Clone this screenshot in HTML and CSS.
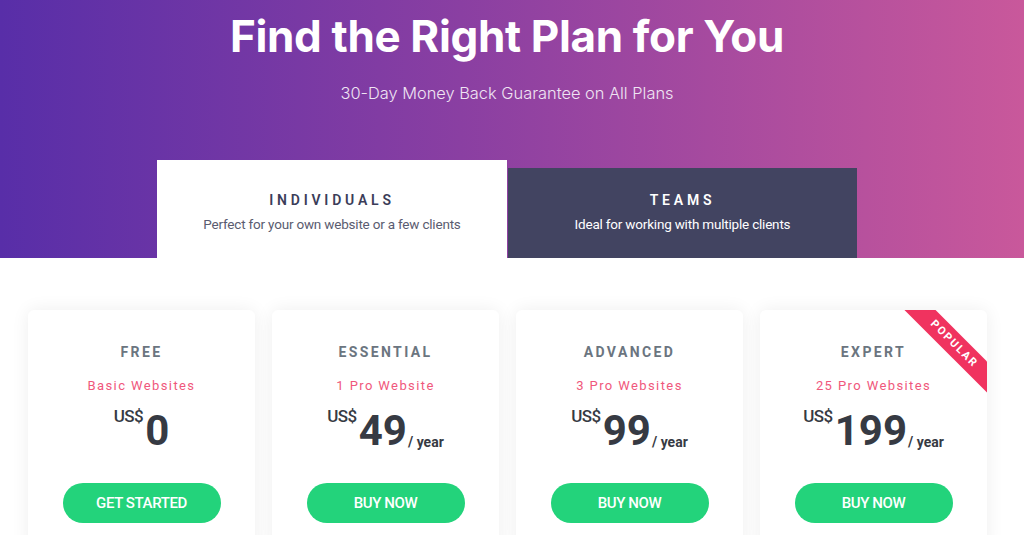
FILE: index.html
```html
<!DOCTYPE html>
<html>
<head>
<meta charset="utf-8">
<link rel="stylesheet" href="styles.css">
</head>
<body>
<section class="hero">
  <h1 class="hero-title">Find the Right Plan for You</h1>
  <p class="hero-sub">30-Day Money Back Guarantee on All Plans</p>
  <div class="tabs">
    <div class="tab tab-active">
      <div class="tab-title">INDIVIDUALS</div>
      <div class="tab-desc">Perfect for your own website or a few clients</div>
    </div>
    <div class="tab tab-dark">
      <div class="tab-title">TEAMS</div>
      <div class="tab-desc">Ideal for working with multiple clients</div>
    </div>
  </div>
</section>
<section class="plans">
  <div class="card">
    <div class="plan-name">FREE</div>
    <div class="plan-sites">Basic Websites</div>
    <div class="price"><span class="cur">US$</span><span class="amount">0</span></div>
    <a class="btn">GET STARTED</a>
  </div>
  <div class="card">
    <div class="plan-name">ESSENTIAL</div>
    <div class="plan-sites">1 Pro Website</div>
    <div class="price"><span class="cur">US$</span><span class="amount">49</span><span class="per">/ year</span></div>
    <a class="btn">BUY NOW</a>
  </div>
  <div class="card">
    <div class="plan-name">ADVANCED</div>
    <div class="plan-sites">3 Pro Websites</div>
    <div class="price"><span class="cur">US$</span><span class="amount">99</span><span class="per">/ year</span></div>
    <a class="btn">BUY NOW</a>
  </div>
  <div class="card">
    <div class="ribbon">POPULAR</div>
    <div class="plan-name">EXPERT</div>
    <div class="plan-sites">25 Pro Websites</div>
    <div class="price"><span class="cur">US$</span><span class="amount">199</span><span class="per">/ year</span></div>
    <a class="btn">BUY NOW</a>
  </div>
</section>
</body>
</html>
```
FILE: styles.css
```css
html, body {
  margin: 0;
  padding: 0;
  background: #fff;
  overflow: hidden;
}
body {
  font-family: Roboto, "Liberation Sans", sans-serif;
}
.hero {
  background: linear-gradient(90deg, #582ea8 0%, #8a3fa2 45%, #c9589b 100%);
  display: flex;
  flex-direction: column;
  align-items: center;
  height: 258px;
  box-sizing: border-box;
  padding: 9px 10px 0 0;
}
.hero-title {
  margin: 0;
  font-family: Inter, "Liberation Sans", sans-serif;
  font-weight: 700;
  font-size: 44px;
  line-height: 54px;
  color: #fff;
  letter-spacing: -0.35px;
}
.hero-sub {
  margin: 19px 0 0;
  font-family: Inter, "Liberation Sans", sans-serif;
  font-weight: 300;
  font-size: 16.4px;
  line-height: 22px;
  color: #efe4f3;
}
.tabs {
  margin-top: auto;
  display: flex;
  align-items: flex-end;
  width: 700px;
}
.tab {
  width: 350px;
  display: flex;
  flex-direction: column;
  align-items: center;
  box-sizing: border-box;
}
.tab-active {
  background: #fff;
  height: 98px;
  padding-top: 31px;
}
.tab-dark {
  background: #424461;
  height: 90px;
  padding-top: 23px;
  margin-left: 1px;
  width: 349px;
}
.tab-title {
  font-weight: 600;
  font-size: 14px;
  letter-spacing: 3.8px;
  line-height: 18px;
  color: #3b3d59;
}
.tab-dark .tab-title {
  color: #fff;
}
.tab-desc {
  margin-top: 7px;
  font-size: 13.5px;
  line-height: 16px;
  color: #5a5c70;
  letter-spacing: -0.2px;
}
.tab-dark .tab-desc {
  color: #fff;
}
.plans {
  display: flex;
  gap: 17px;
  padding: 52px 0 0 28px;
}
.card {
  position: relative;
  overflow: hidden;
  width: 227px;
  height: 240px;
  background: #fff;
  border-radius: 6px;
  box-shadow: 0 0 18px rgba(0, 0, 0, 0.07);
  display: flex;
  flex-direction: column;
  align-items: center;
  padding-top: 34px;
  box-sizing: border-box;
}
.plan-name {
  font-weight: 700;
  font-size: 14px;
  line-height: 16px;
  letter-spacing: 2.4px;
  color: #6b7580;
}
.plan-sites {
  margin-top: 18px;
  font-size: 13px;
  line-height: 16px;
  letter-spacing: 1.4px;
  color: #f0577c;
}
.price {
  margin-top: 13px;
  display: flex;
  align-items: flex-start;
  color: #363a43;
  height: 48px;
}
.cur {
  font-size: 17px;
  line-height: 20px;
  margin-top: -1px;
  font-weight: 500;
  letter-spacing: -0.5px;
}
.amount {
  font-size: 42px;
  font-weight: 700;
  line-height: 48px;
  margin-left: 2px;
}
.per {
  align-self: flex-end;
  font-size: 14px;
  font-weight: 700;
  line-height: 18px;
  margin-left: 1px;
  margin-bottom: 4px;
}
.btn {
  margin-top: 28px;
  width: 158px;
  height: 40px;
  border-radius: 20px;
  background: #23d37b;
  color: #fff;
  font-size: 15px;
  font-weight: 500;
  letter-spacing: -0.4px;
  display: flex;
  align-items: center;
  justify-content: center;
}
.ribbon {
  position: absolute;
  top: 23px;
  right: -37px;
  width: 140px;
  height: 22px;
  line-height: 22px;
  transform: rotate(45deg);
  background: #f0335f;
  color: #fff;
  font-size: 11px;
  font-weight: 700;
  letter-spacing: 1.8px;
  text-align: center;
}
```
